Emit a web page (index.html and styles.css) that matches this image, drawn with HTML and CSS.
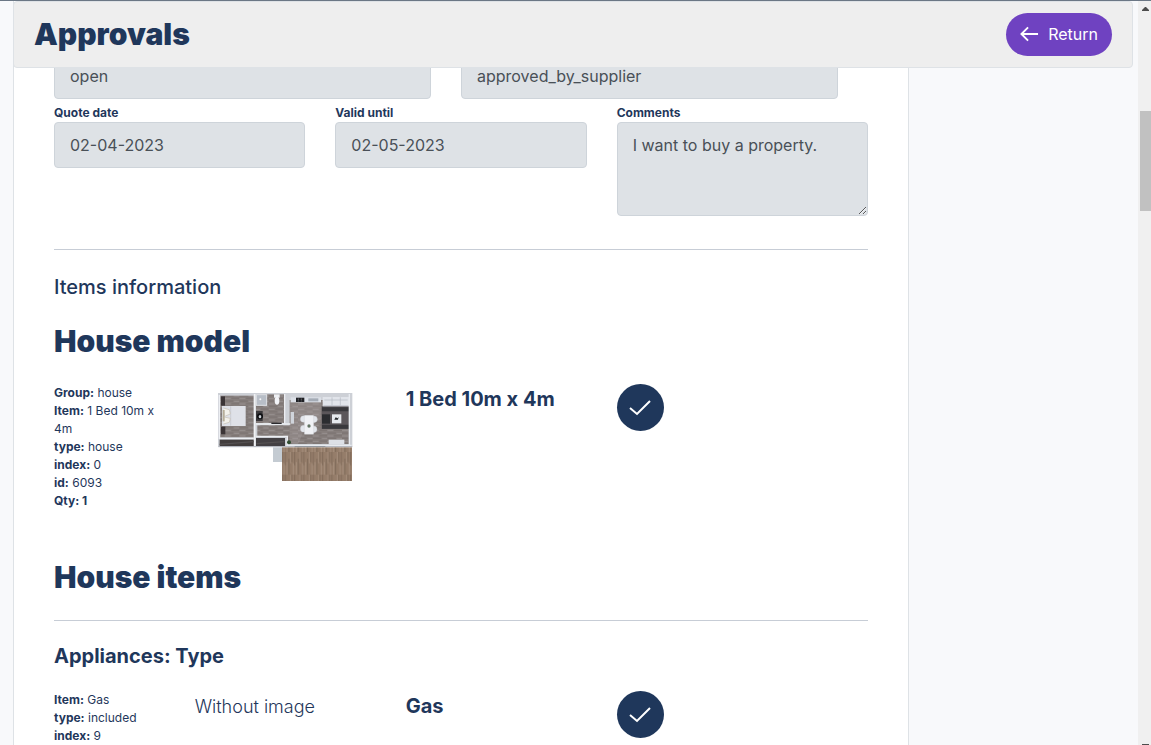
FILE: index.html
```html
<!DOCTYPE html>
<html lang="en">
<head>
<meta charset="utf-8">
<title>Approvals</title>
<link rel="stylesheet" href="styles.css">
</head>
<body>
<div class="page">
  <div class="content">
    <header class="topbar">
      <h1 class="heading">Approvals</h1>
      <button class="return" type="button">
        <svg class="return-icon" viewBox="0 0 20 16" aria-hidden="true"><path d="M19 8H2M8.500 1L1.500 8l7 7"/></svg>
        Return
      </button>
    </header>
    <main class="card">
      <div class="row-two">
        <input class="field" aria-label="Status" value="open" readonly>
        <input class="field" aria-label="Supplier status" value="approved_by_supplier" readonly>
      </div>
      <div class="row-three">
        <div class="group">
          <label class="label" for="quote">Quote date</label>
          <input class="field" id="quote" value="02-04-2023" readonly>
        </div>
        <div class="group">
          <label class="label" for="valid">Valid until</label>
          <input class="field" id="valid" value="02-05-2023" readonly>
        </div>
        <div class="group">
          <label class="label" for="comments">Comments</label>
          <textarea class="field comments" id="comments" readonly>I want to buy a property.</textarea>
        </div>
      </div>
      <hr class="rule">
      <h2 class="section">Items information</h2>
      <h2 class="heading">House model</h2>
      <div class="item">
        <div class="details">
          <div><b>Group:</b> house</div>
          <div><b>Item:</b> 1 Bed 10m x 4m</div>
          <div><b>type:</b> house</div>
          <div><b>index:</b> 0</div>
          <div><b>id:</b> 6093</div>
          <div><b>Qty: 1</b></div>
        </div>
        <div class="picture">
          <svg class="plan" viewBox="24 27 405 264" role="img" aria-label="Floor plan">
            <defs>
              <pattern id="deck" width="28" height="68" patternUnits="userSpaceOnUse">
                <rect width="28" height="68" fill="#957d6a"/>
                <path d="M2 0v40M13 20v48M22 0v30" stroke="#806b5a" stroke-width="3"/>
                <path d="M7 30v38M18 0v34M26 34v34" stroke="#a58e7c" stroke-width="3"/>
              </pattern>
              <pattern id="floor" width="44" height="16" patternUnits="userSpaceOnUse">
                <rect width="44" height="16" fill="#877f7d"/>
                <path d="M0 3h26M20 11h24" stroke="#7a7170" stroke-width="3"/>
                <path d="M28 4h16M0 12h18" stroke="#979090" stroke-width="3"/>
              </pattern>
            </defs>
            <rect x="24" y="27" width="403" height="161" fill="#cdd0d6"/>
            <rect x="31" y="35" width="100" height="125" fill="url(#floor)"/>
            <rect x="33" y="37" width="12" height="28" fill="#3b3436"/>
            <rect x="33" y="128" width="13" height="23" fill="#3b3436"/>
            <rect x="36" y="66" width="71" height="60" fill="#dfe1e8"/>
            <path d="M62 67v58" stroke="#c0c2ca" stroke-width="2"/>
            <path d="M40 72l18 5 3 13-15 6M40 120l18-5 3-12-18-4" fill="#f3f1eb" stroke="#c5beb2" stroke-width="2"/>
            <rect x="38" y="78" width="6" height="34" fill="#b7ae99"/>
            <path d="M28 33v130h103" fill="none" stroke="#eceef2" stroke-width="4"/>
            <path d="M134 30v157" stroke="#f0f1f4" stroke-width="5"/>
            <rect x="138" y="31" width="84" height="86" fill="url(#floor)"/>
            <rect x="139" y="32" width="31" height="32" fill="#b8bec7" stroke="#e0e3e8" stroke-width="3"/>
            <circle cx="151" cy="46" r="3" fill="#f6f7f9"/>
            <rect x="138" y="81" width="20" height="30" fill="#3a383b"/>
            <ellipse cx="150" cy="97" rx="9" ry="9" fill="#0d0e11"/>
            <ellipse cx="150" cy="98" rx="4" ry="5" fill="#c8ccd2"/>
            <rect x="192" y="31" width="17" height="10" fill="#eef0f4"/>
            <ellipse cx="201" cy="50" rx="7" ry="12" fill="#f3f4f8"/>
            <path d="M142 124h97V48h178v132H232v-24h-90z" fill="url(#floor)"/>
            <path d="M239 48h95v60h-40l-28 70h-27z" fill="#aaa0a1" opacity=".35"/>
            <path d="M224 30v88M137 120h104M137 157h95v28" fill="none" stroke="#eceef2" stroke-width="4"/>
            <path d="M184 118h31" stroke="#2a292d" stroke-width="4"/>
            <rect x="29" y="167" width="102" height="19" fill="#423d3d"/>
            <rect x="138" y="162" width="87" height="24" fill="#434043"/>
            <path d="M29 181l102-8M139 179l84-6" stroke="#545051" stroke-width="4"/>
            <rect x="242" y="40" width="91" height="15" fill="#dce0e7"/>
            <rect x="258" y="41" width="25" height="13" fill="#1f2024"/>
            <path d="M265 44v3m9-3v3m-9 3v2m9-2v2" stroke="#b1b3b8" stroke-width="2"/>
            <rect x="295" y="43" width="30" height="9" fill="#a5acb6"/>
            <rect x="242" y="84" width="10" height="35" fill="#d0d4db"/>
            <rect x="335" y="66" width="82" height="69" fill="#5b565a"/>
            <path d="M336 76h81M336 128h81" stroke="#39383c" stroke-width="12"/>
            <path d="M338 39h79v28h-79z" fill="#e1e4ea"/>
            <path d="M343 48h70M366 40v24M391 40v24M340 65h76" stroke="#b3b8c1" stroke-width="2"/>
            <rect x="336" y="91" width="24" height="28" fill="#2b2c30"/>
            <rect x="366" y="91" width="28" height="27" fill="#e7e9ee"/>
            <path d="M373 107l4-7 6 3 3-5-2 9z" fill="#27292c"/>
            <g fill="#e3e6ec" stroke="#c2c5cc">
              <ellipse cx="281" cy="105" rx="10" ry="10"/><ellipse cx="312" cy="106" rx="10" ry="10"/>
              <ellipse cx="281" cy="134" rx="10" ry="10"/><ellipse cx="311" cy="136" rx="10" ry="10"/>
              <rect x="283" y="94" width="28" height="57" rx="2" fill="#f0f1f5"/>
            </g>
            <circle cx="297" cy="126" r="5" fill="#627363"/>
            <rect x="356" y="167" width="47" height="14" fill="#dde0e6"/>
            <circle cx="237" cy="175" r="6" fill="#314d31"/>
            <path d="M418 30v157M229 184h196" stroke="#e8ebf0" stroke-width="4"/>
            <path d="M25 188h402" stroke="#aeb1b9" stroke-width="3"/>
            <path d="M254 188h92" stroke="#8d9198" stroke-width="3"/>
            <rect x="189" y="190" width="27" height="44" fill="#c4cbd2"/>
            <rect x="216" y="190" width="210" height="101" fill="url(#deck)"/>
          </svg>
        </div>
        <h3 class="name">1 Bed 10m x 4m</h3>
        <div class="state"><span class="check"><svg class="tick" viewBox="0 0 22 16" role="img" aria-label="Approved"><path d="M1 8l7 6L21 1"/></svg></span></div>
      </div>
      <h2 class="heading items-heading">House items</h2>
      <hr class="rule">
      <h3 class="name category">Appliances: Type</h3>
      <div class="item">
        <div class="details">
          <div><b>Item:</b> Gas</div>
          <div><b>type:</b> included</div>
          <div><b>index:</b> 9</div>
        </div>
        <div class="no-image">Without image</div>
        <h3 class="name">Gas</h3>
        <div class="state"><span class="check"><svg class="tick" viewBox="0 0 22 16" role="img" aria-label="Approved"><path d="M1 8l7 6L21 1"/></svg></span></div>
      </div>
    </main>
  </div>
  <div class="scrollbar" aria-hidden="true">
    <svg class="arrow" viewBox="0 0 7 4"><path d="M0 4V3l3-3h1l3 3v1z"/></svg>
    <div class="thumb"></div>
    <svg class="arrow arrow-down" viewBox="0 0 7 4"><path d="M0 0v1l3 3h1l3-3V0z"/></svg>
  </div>
</div>
</body>
</html>
```
FILE: styles.css
```css
* { box-sizing: border-box; }
body {
  margin: 0;
  height: 100vh;
  overflow: hidden;
  background: #f8f9fb;
  color: #1f375b;
  font: 16px/24px Inter, "Liberation Sans", sans-serif;
}
.page {
  display: flex;
  height: 100vh;
  overflow: hidden;
  border-top: 1px solid #6b7785;
}
.content {
  position: relative;
  flex: 1;
  margin: 0 5px 0 13px;
}
.topbar {
  position: absolute;
  top: 0;
  left: 0;
  right: 0;
  z-index: 1;
  display: flex;
  align-items: flex-start;
  justify-content: space-between;
  padding: 11px 20px;
  background: #eee;
  border: 1px solid #dee2e6;
  border-radius: 4px;
}
h1, h2, h3 { margin: 0; }
.heading {
  font-size: 30px;
  line-height: 36px;
  font-weight: 900;
}
.topbar .heading { line-height: 42px; }
.return {
  display: flex;
  align-items: center;
  gap: 9px;
  height: 43px;
  padding: 0 14px 2px;
  border: 0;
  border-radius: 22px;
  background: #6f42c1;
  color: #fff;
  font: 16px/24px Inter, "Liberation Sans", sans-serif;
}
.return-icon {
  width: 19px;
  height: 16px;
  fill: none;
  stroke: #fff;
  stroke-width: 2;
}
.card {
  width: 80%;
  min-height: 100%;
  padding: 52px 40px 0;
  background: #fff;
  border: solid #dee2e6;
  border-width: 0 1px;
}
.row-two {
  display: grid;
  grid-template-columns: 1fr 1fr;
  gap: 30px;
  padding-right: 30px;
  margin-bottom: 5px;
}
.row-three {
  display: grid;
  grid-template-columns: repeat(3, 1fr);
  gap: 30px;
}
.label {
  display: block;
  font-size: 12px;
  line-height: 18px;
  font-weight: 700;
}
.field {
  display: block;
  width: 100%;
  height: 46px;
  margin: 0;
  padding: 10px 15px;
  border: 1px solid #ced4da;
  border-radius: 4px;
  background: #dee2e6;
  color: #495057;
  font: 16px/24px Inter, "Liberation Sans", sans-serif;
}
.comments { height: 94px; }
.rule {
  margin: 0;
  border: 0;
  border-top: 1px solid #c7cdd6;
}
.row-three + .rule { margin: 33px 0 22px; }
.section {
  margin-bottom: 21px;
  font-size: 20px;
  line-height: 30px;
  font-weight: 500;
}
.item {
  display: grid;
  grid-template-columns: repeat(12, 1fr);
  column-gap: 30px;
}
.section + .heading { margin-bottom: 25px; }
.details {
  grid-column: span 2;
  font-size: 12px;
  line-height: 18px;
}
.details b { font-weight: 700; }
.picture, .no-image, .item .name { grid-column: span 3; }
.picture {
  display: flex;
  justify-content: center;
  align-items: flex-start;
  padding-top: 9px;
}
.plan { width: 135px; height: 88px; }
.no-image {
  font-size: 18px;
  line-height: 32px;
  font-weight: 300;
}
.name {
  font-size: 20px;
  line-height: 30px;
  font-weight: 700;
}
.state { grid-column: span 4; }
.check {
  display: flex;
  align-items: center;
  justify-content: center;
  width: 47px;
  height: 47px;
  border-radius: 50%;
  background: #1f375b;
}
.tick {
  width: 22px;
  height: 16px;
  fill: none;
  stroke: #fff;
  stroke-width: 2;
}
.items-heading { margin: 49px 0 25px; }
.category { margin: 20px 0; }
.scrollbar {
  position: relative;
  display: flex;
  flex-direction: column;
  width: 13px;
  padding: 6px 0 0 2px;
  background: #f0f0f0;
}
.arrow {
  width: 7px;
  height: 4px;
  margin-left: 2px;
  fill: #4d4d4d;
}
.thumb {
  height: 100px;
  margin-top: 100px;
  background: #c1c1c1;
}
.arrow-down {
  position: absolute;
  left: 2px;
  bottom: -3px;
}
```
